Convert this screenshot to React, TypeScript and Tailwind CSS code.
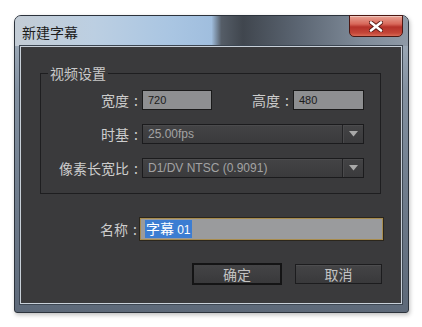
import React from "react";

function Select({ text }: { text: string }) {
  return (
    <div className="w-[222px] h-[20px] flex items-center border border-[#1b1b1d] bg-[linear-gradient(180deg,#434345_0%,#3a3a3c_100%)] shadow-[inset_0_1px_0_#4b4b4d]">
      <span className="flex-1 pl-[5px] text-[12px] leading-[18px] text-[#a3a3a3] font-['Liberation_Sans',sans-serif]">
        {text}
      </span>
      <div className="w-[2px] h-full border-l border-[#232325] bg-[#4a4a4c]" />
      <div className="w-[19px] h-full flex items-center justify-center">
        <svg width="9" height="6" viewBox="0 0 9 6">
          <polygon points="0,0 9,0 4.5,5.5" fill="#a9a9a9" />
        </svg>
      </div>
    </div>
  );
}

function Label({ text, w }: { text: string; w: string }) {
  return (
    <div className={`${w} flex justify-end items-center text-[14px] leading-[20px] text-[#cdcdcd]`}>
      <span>{text}</span>
      <span className="ml-[5px]">:</span>
    </div>
  );
}

export default function App() {
  return (
    <div className="w-[422px] h-[327px] bg-white pt-[15px] pl-[14px] font-['Noto_Sans_CJK_SC',sans-serif]">
      <div className="w-[395px] h-[298px] flex flex-col border border-[#2c333c] rounded-t-[7px] rounded-b-[3px] bg-[linear-gradient(180deg,#a9b5c2_0%,#8391a1_25%,#6f7c8c_60%,#5d6979_100%)] shadow-[1px_2px_4px_rgba(0,0,0,0.25)]">
        {/* title bar */}
        <div className="h-[30px] shrink-0 flex items-start justify-between rounded-t-[6px] bg-[linear-gradient(90deg,#c3ccd5_0%,#bccfe2_20%,#a9c5e2_40%,#a0bede_50%,#555d67_52.5%,#40464e_58%,#5b6572_72%,#7f8b99_88%,#8f9aa7_100%)]">
          <div className="self-center pl-[7px] pt-[1px] text-[14px] leading-[18px] text-[#1d1d1d]">
            新建字幕
          </div>
          <div className="-mt-[1px] mr-[5px] w-[54px] h-[22px] rounded-b-[5px] border border-[#4b1712] bg-[linear-gradient(180deg,#e8a395_0%,#d8685a_40%,#b5322a_55%,#c44638_85%,#d86a56_100%)] shadow-[inset_0_1px_0_rgba(255,255,255,0.4)] flex items-center justify-center">
            <svg width="14" height="11" viewBox="0 0 14 11">
              <path d="M2 1.5 L12 9.5 M12 1.5 L2 9.5" stroke="#5a1a14" strokeWidth="4.4" strokeLinecap="round" />
              <path d="M2 1.5 L12 9.5 M12 1.5 L2 9.5" stroke="#ffffff" strokeWidth="2.6" strokeLinecap="round" />
            </svg>
          </div>
        </div>

        {/* content */}
        <div className="ml-[5px] mr-[6px] h-[258px] shrink-0 border border-[#c8d0d9] bg-[#3a3a3c] flex flex-col shadow-[0_0_0_1px_#3c4652]">
          <fieldset className="mt-[17px] ml-[19px] w-[341px] border border-[#1e1e20]">
            <legend className="ml-[7px] px-[2px] text-[14px] leading-[18px] text-[#c9c9c9]">视频设置</legend>
            <div className="pt-[8px] pb-[15px] flex flex-col gap-[14px]">
              <div className="flex items-center">
                <Label text="宽度" w="w-[97px]" />
                <div className="ml-[4px] w-[70px] h-[20px] border border-[#1a1a1a] bg-[#8e8f91] pl-[5px] text-[11px] leading-[18px] text-[#1c1c1c] font-['Liberation_Sans',sans-serif]">
                  720
                </div>
                <Label text="高度" w="w-[77px]" />
                <div className="ml-[4px] w-[71px] h-[20px] border border-[#1a1a1a] bg-[#8e8f91] pl-[5px] text-[11px] leading-[18px] text-[#1c1c1c] font-['Liberation_Sans',sans-serif]">
                  480
                </div>
              </div>
              <div className="flex items-center">
                <Label text="时基" w="w-[97px]" />
                <div className="ml-[4px]">
                  <Select text="25.00fps" />
                </div>
              </div>
              <div className="flex items-center">
                <Label text="像素长宽比" w="w-[97px]" />
                <div className="ml-[4px]">
                  <Select text="D1/DV NTSC (0.9091)" />
                </div>
              </div>
            </div>
          </fieldset>

          <div className="mt-[24px] flex items-center">
            <Label text="名称" w="w-[116px]" />
            <div className="ml-[3px] w-[243px] h-[22px] border border-[#a88c4e] shadow-[0_0_0_1px_#2b261c] bg-[#9a9b9d] flex items-center pl-[4px]">
              <span className="bg-[#3c7dd2] text-white text-[14px] leading-[16px] px-[1px]">
                字幕 <span className="font-['Liberation_Sans',sans-serif] text-[12px]">01</span>
              </span>
            </div>
          </div>

          <div className="mt-[23px] flex justify-end items-center gap-[13px] pr-[19px]">
            <div className="w-[90px] h-[22px] border-2 border-[#141415] bg-[linear-gradient(180deg,#444446_0%,#39393b_100%)] flex items-center justify-center text-[14px] text-[#c2c2c2] leading-[18px]">
              确定
            </div>
            <div className="w-[87px] h-[20px] border border-[#1c1c1e] bg-[linear-gradient(180deg,#444446_0%,#39393b_100%)] shadow-[inset_0_1px_0_#4d4d4f] flex items-center justify-center text-[14px] text-[#c2c2c2] leading-[18px]">
              取消
            </div>
          </div>
        </div>
      </div>
    </div>
  );
}
